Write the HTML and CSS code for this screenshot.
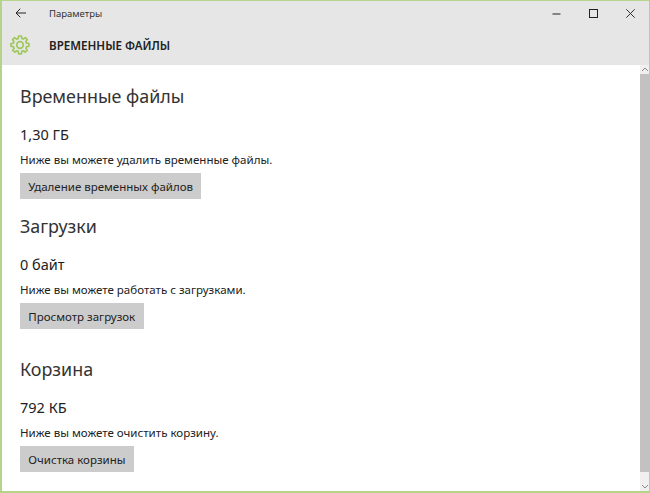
FILE: index.html
```html
<!DOCTYPE html>
<html lang="ru">
<head>
<meta charset="utf-8">
<title>Параметры</title>
<link rel="stylesheet" href="styles.css">
</head>
<body>
<div class="window">
  <header class="header">
    <div class="titlebar">
      <svg class="back" width="11" height="10" viewBox="0 0 11 10"><path d="M11 5H1M5.300.700 1 5l4.300 4.300" fill="none" stroke="#222" stroke-width="1"/></svg>
      <span class="app-title">Параметры</span>
      <div class="controls">
        <svg class="ctl" width="9" height="9" viewBox="0 0 9 9"><path d="M.5 5h8" stroke="#222" stroke-width="1"/></svg>
        <svg class="ctl" width="9" height="9" viewBox="0 0 9 9"><rect x=".5" y=".5" width="8" height="8" fill="none" stroke="#222" stroke-width="1"/></svg>
        <svg class="ctl" width="9" height="9" viewBox="0 0 9 9"><path d="M.3.300l8.400 8.400M8.700.300.300 8.700" stroke="#333" stroke-width="1"/></svg>
      </div>
    </div>
    <div class="pagebar">
      <svg class="gear" width="20" height="20" viewBox="0 0 20 20"><path d="M8.600 1h2.800l.4 2.400 1.500.6 2-1.400 2 2-1.400 2 .6 1.500 2.400.4v2.800l-2.400.4-.6 1.500 1.400 2-2 2-2-1.400-1.500.6-.4 2.400H8.600l-.4-2.400-1.500-.6-2 1.400-2-2 1.400-2-.6-1.500L1 11.400V8.600l2.400-.4.6-1.500-1.400-2 2-2 2 1.400 1.500-.6z" fill="none" stroke="#a0c85c" stroke-width="1.700" stroke-linejoin="round"/><circle cx="10" cy="10" r="3.300" fill="none" stroke="#a0c85c" stroke-width="1.700"/></svg>
      <h1 class="page-title">ВРЕМЕННЫЕ ФАЙЛЫ</h1>
    </div>
  </header>
  <div class="body">
    <main class="content">
      <section class="section first">
        <h2 class="heading">Временные файлы</h2>
        <div class="size">1,30 ГБ</div>
        <p class="note">Ниже вы можете удалить временные файлы.</p>
        <button class="btn">Удаление временных файлов</button>
      </section>
      <section class="section second">
        <h2 class="heading">Загрузки</h2>
        <div class="size">0 байт</div>
        <p class="note">Ниже вы можете работать с загрузками.</p>
        <button class="btn">Просмотр загрузок</button>
      </section>
      <section class="section third">
        <h2 class="heading">Корзина</h2>
        <div class="size">792 КБ</div>
        <p class="note">Ниже вы можете очистить корзину.</p>
        <button class="btn">Очистка корзины</button>
      </section>
    </main>
    <div class="scrollbar">
      <svg class="arrow-up" width="8" height="5" viewBox="0 0 8 5"><path d="M1 4l3-3 3 3" fill="none" stroke="#8a8a8a" stroke-width="1"/></svg>
      <div class="thumb"></div>
      <svg class="arrow-down" width="8" height="5" viewBox="0 0 8 5"><path d="M1 1l3 3 3-3" fill="none" stroke="#8a8a8a" stroke-width="1"/></svg>
    </div>
  </div>
</div>
</body>
</html>
```

FILE: styles.css
```css
* { box-sizing: border-box; }
html, body { margin: 0; height: 100%; }
body { font-family: "Noto Sans", "Open Sans", sans-serif; color: #222; background: #fff; }
.window { width: 650px; height: 493px; border: 2px solid #b5d48a; border-top-width: 1px; border-right-width: 1px; display: flex; flex-direction: column; overflow: hidden; }
.header { background: #e6e6e6; height: 64px; flex: none; }
.titlebar { height: 24px; display: flex; align-items: center; padding-left: 13px; }
.back { flex: none; }
.app-title { font-size: 9.5px; margin-left: 23px; color: #333; }
.controls { margin-left: auto; display: flex; }
.ctl { width: 37px; flex: none; }
.pagebar { height: 40px; display: flex; align-items: center; padding-left: 8px; }
.gear { flex: none; }
.page-title { margin: 0 0 0 19px; font-size: 11.6px; font-weight: 600; color: #222; }
.body { flex: 1; display: flex; min-height: 0; }
.content { flex: 1; padding-left: 18px; }
.heading { margin: 0; font-size: 17.9px; font-weight: 400; line-height: 24px; color: #333; }
.size { font-size: 14.5px; line-height: 20px; margin-top: 16px; }
.note { margin: 8px 0 0; font-size: 11.55px; line-height: 16px; }
.btn { display: block; margin-top: 5px; height: 26px; padding: 0 8.300px; border: 0; background: #ccc; font: inherit; font-size: 11.5px; color: #222; }
.section.first { padding-top: 19px; }
.section.second { padding-top: 15px; }
.section.third { padding-top: 28px; }
.scrollbar { width: 9px; flex: none; background: #f0f0f0; display: flex; flex-direction: column; align-items: center; }
.arrow-up { flex: none; margin: 2px 0; }
.arrow-down { flex: none; margin: 4px 0 2px; }
.thumb { flex: 1; width: 100%; background: #c2c2c2; margin-bottom: 8px; }
```
